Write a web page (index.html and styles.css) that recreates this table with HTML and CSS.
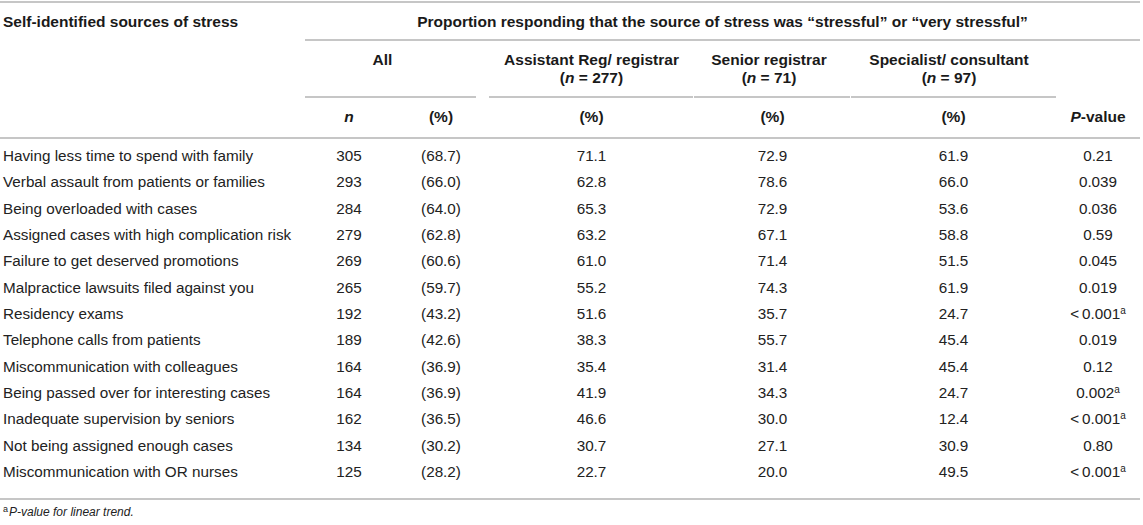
FILE: index.html
```html
<!DOCTYPE html>
<html lang="en">
<head>
<meta charset="utf-8">
<title>Sources of stress</title>
<link rel="stylesheet" href="styles.css">
</head>
<body>
<table class="stress-table">
  <colgroup>
    <col class="c-src"><col class="c-n"><col class="c-pct"><col class="c-asst"><col class="c-sen"><col class="c-spec"><col class="c-p">
  </colgroup>
  <thead>
    <tr class="h1">
      <th class="src" rowspan="3">Self-identified sources of stress</th>
      <th class="prop" colspan="6">Proportion responding that the source of stress was “stressful” or “very stressful”</th>
    </tr>
    <tr class="h2">
      <th class="grp g-all" colspan="2">All</th>
      <th class="grp g-asst">Assistant Reg/ registrar<br>(<i>n</i> = 277)</th>
      <th class="grp g-sen">Senior registrar<br>(<i>n</i> = 71)</th>
      <th class="grp g-spec">Specialist/ consultant<br>(<i>n</i> = 97)</th>
      <th class="grp g-p"></th>
    </tr>
    <tr class="h3">
      <th><i>n</i></th>
      <th>(%)</th>
      <th>(%)</th>
      <th>(%)</th>
      <th>(%)</th>
      <th><i>P</i>-value</th>
    </tr>
  </thead>
  <tbody>
    <tr><td>Having less time to spend with family</td><td>305</td><td>(68.7)</td><td>71.1</td><td>72.9</td><td>61.9</td><td>0.21</td></tr>
    <tr><td>Verbal assault from patients or families</td><td>293</td><td>(66.0)</td><td>62.8</td><td>78.6</td><td>66.0</td><td>0.039</td></tr>
    <tr><td>Being overloaded with cases</td><td>284</td><td>(64.0)</td><td>65.3</td><td>72.9</td><td>53.6</td><td>0.036</td></tr>
    <tr><td>Assigned cases with high complication risk</td><td>279</td><td>(62.8)</td><td>63.2</td><td>67.1</td><td>58.8</td><td>0.59</td></tr>
    <tr><td>Failure to get deserved promotions</td><td>269</td><td>(60.6)</td><td>61.0</td><td>71.4</td><td>51.5</td><td>0.045</td></tr>
    <tr><td>Malpractice lawsuits filed against you</td><td>265</td><td>(59.7)</td><td>55.2</td><td>74.3</td><td>61.9</td><td>0.019</td></tr>
    <tr><td>Residency exams</td><td>192</td><td>(43.2)</td><td>51.6</td><td>35.7</td><td>24.7</td><td>&lt;&#8201;0.001<sup>a</sup></td></tr>
    <tr><td>Telephone calls from patients</td><td>189</td><td>(42.6)</td><td>38.3</td><td>55.7</td><td>45.4</td><td>0.019</td></tr>
    <tr><td>Miscommunication with colleagues</td><td>164</td><td>(36.9)</td><td>35.4</td><td>31.4</td><td>45.4</td><td>0.12</td></tr>
    <tr><td>Being passed over for interesting cases</td><td>164</td><td>(36.9)</td><td>41.9</td><td>34.3</td><td>24.7</td><td>0.002<sup>a</sup></td></tr>
    <tr><td>Inadequate supervision by seniors</td><td>162</td><td>(36.5)</td><td>46.6</td><td>30.0</td><td>12.4</td><td>&lt;&#8201;0.001<sup>a</sup></td></tr>
    <tr><td>Not being assigned enough cases</td><td>134</td><td>(30.2)</td><td>30.7</td><td>27.1</td><td>30.9</td><td>0.80</td></tr>
    <tr><td>Miscommunication with OR nurses</td><td>125</td><td>(28.2)</td><td>22.7</td><td>20.0</td><td>49.5</td><td>&lt;&#8201;0.001<sup>a</sup></td></tr>
  </tbody>
</table>
<p class="footnote"><sup>a</sup><i>P-value for linear trend.</i></p>
</body>
</html>
```

FILE: styles.css
```css
html, body {
  margin: 0;
  padding: 0;
  background: #ffffff;
}

body {
  font-family: "Liberation Sans", Arial, Helvetica, sans-serif;
  color: #222222;
  font-size: 15.25px;
  line-height: 18px;
}

.stress-table {
  width: 1140px;
  margin-top: 1px;
  border-collapse: separate;
  border-spacing: 0;
  border-top: 2px solid #c6c6c6;
  border-bottom: 2px solid #c6c6c6;
  table-layout: fixed;
}

.c-src { width: 305px; }
.c-n { width: 88px; }
.c-pct { width: 96px; }
.c-asst { width: 205px; }
.c-sen { width: 157px; }
.c-spec { width: 205px; }
.c-p { width: 84px; }

th, td {
  padding: 0 3px;
  text-align: center;
  vertical-align: top;
  white-space: nowrap;
}

th {
  font-weight: bold;
  font-size: 15.5px;
  color: #1a1a1a;
}

.h1 th {
  padding-top: 10px;
  padding-bottom: 10px;
}

th.src {
  text-align: left;
  border-bottom: 2px solid #c6c6c6;
}

th.prop {
  background-image: linear-gradient(#c6c6c6, #c6c6c6);
  background-repeat: no-repeat;
  background-position: left bottom;
  background-size: 100% 2px;
}

.h2 th {
  padding-top: 10px;
  padding-bottom: 11px;
  height: 36px;
}

.grp {
  background-image: linear-gradient(#c6c6c6, #c6c6c6);
  background-repeat: no-repeat;
  background-position: left bottom;
}

.g-all { background-size: calc(100% - 13px) 2px; padding-right: 32px; }
.g-asst { background-size: calc(100% - 1px) 2px; }
.g-sen { background-size: calc(100% - 1px) 2px; padding-right: 10px; }
.g-spec { background-size: 100% 2px; padding-right: 12px; }
.g-p { background-image: none; }

th i {
  font-style: italic;
}

.h3 th {
  padding-top: 10px;
  padding-bottom: 11px;
  border-bottom: 2px solid #c6c6c6;
}

tbody td {
  padding-top: 4.17px;
  padding-bottom: 4.16px;
}

tbody td:first-child {
  text-align: left;
}

tbody tr:first-child td {
  padding-top: 8.17px;
}

tbody tr:last-child td {
  padding-bottom: 17.5px;
}

sup {
  font-size: 10px;
  line-height: 0;
  vertical-align: 5px;
}

.footnote {
  margin: 4px 0 0 0;
  padding-left: 3px;
  font-size: 12px;
  line-height: 16px;
}

.footnote sup {
  font-size: 9px;
  vertical-align: 4px;
  margin-right: 1px;
}
```
